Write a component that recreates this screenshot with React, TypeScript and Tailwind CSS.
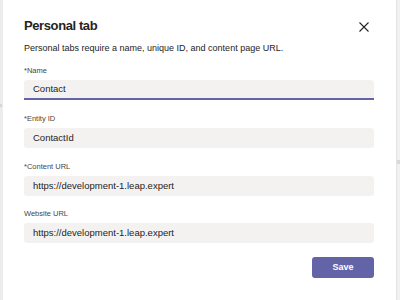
import React from 'react';

const fields = [
    { label: '*Name', value: 'Contact', active: true, gap: 'mt-0' },
    { label: '*Entity ID', value: 'ContactId', active: false, gap: 'mt-[14px]' },
    { label: '*Content URL', value: 'https://development-1.leap.expert', active: false, gap: 'mt-[14px]' },
    { label: 'Website URL', value: 'https://development-1.leap.expert', active: false, gap: 'mt-[13px]' },
];

export default function App() {
    return (
        <div className="w-[400px] h-[300px] flex bg-white overflow-hidden" style={{ fontFamily: '"Liberation Sans", Arial, sans-serif' }}>
            {/* left edge of the page behind the dialog */}
            <div className="w-[3px] bg-[#ececec] flex flex-col">
                <div className="h-[104px]" />
                <div className="h-[3px] w-[2px] bg-[#d6d6d6]" />
            </div>

            <div className="flex-1 pl-[21px] pr-[22px] pt-[18px]">
                <div className="flex items-start justify-between">
                    <h2 className="text-[13px] leading-[16px] font-bold tracking-[-0.4px] text-[#252423]">Personal tab</h2>
                    <button className="mt-[4px] mr-[5px] text-[#252423]">
                        <svg width="10" height="10" viewBox="0 0 10 10" fill="none" stroke="currentColor" strokeWidth="1.1">
                            <path d="M0.5 0.5 L9.5 9.5 M9.5 0.5 L0.5 9.5" />
                        </svg>
                    </button>
                </div>
                <p className="mt-[8px] text-[9px] leading-[12px] text-[#252423]">
                    Personal tabs require a name, unique ID, and content page URL.
                </p>

                <div className="mt-[12px] flex flex-col">
                    {fields.map(f => (
                        <div key={f.label} className={f.gap}>
                            <div className="text-[7.5px] leading-[10px] text-[#484644]">{f.label}</div>
                            <div className={`mt-[4px] h-[20px] bg-[#f3f2f1] pl-[9px] flex items-center text-[9.5px] text-[#252423] ${f.active ? 'border-b-2 border-[#6264a7] rounded-t-[3px]' : 'rounded-[3px]'}`}>
                                {f.value}
                            </div>
                        </div>
                    ))}
                </div>

                <div className="mt-[14px] flex justify-end">
                    <button className="w-[62px] h-[21px] rounded-[3px] bg-[#6264a7] text-white text-[9px] font-bold">Save</button>
                </div>
            </div>

            {/* right edge / scrollbar */}
            <div className="w-[4px] bg-[#f1f1f1] border-l border-[#e4e4e4] flex flex-col">
                <div className="h-[160px]" />
                <div className="h-[4px] bg-[#d9d9d9]" />
            </div>
        </div>
    );
}
